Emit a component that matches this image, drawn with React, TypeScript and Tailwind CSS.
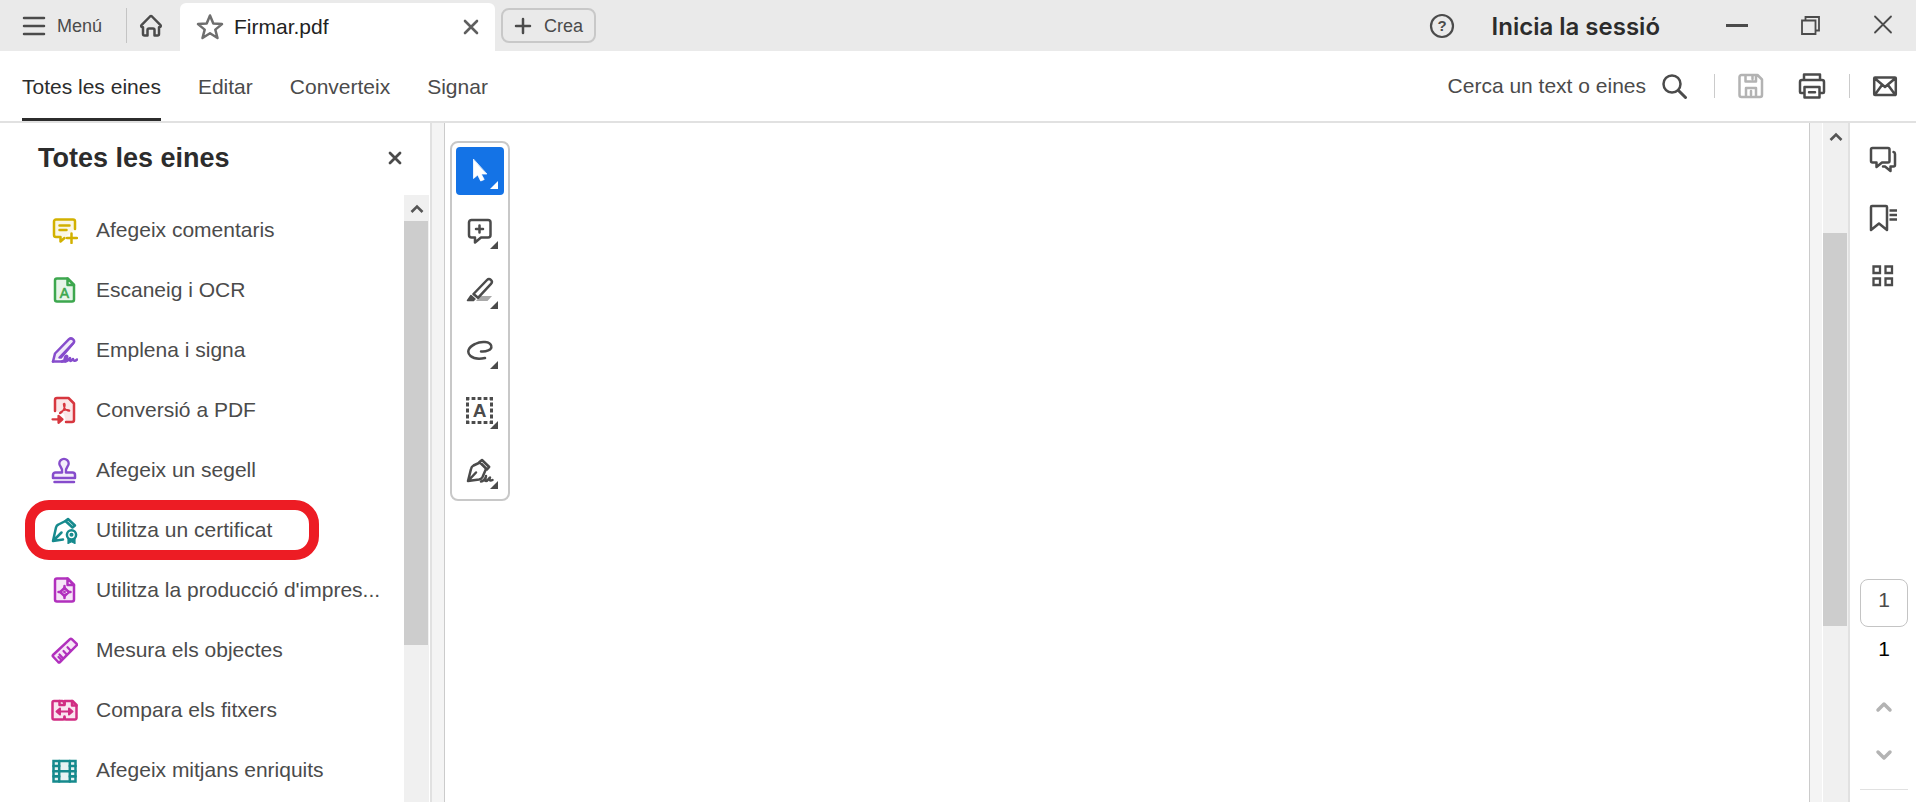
import React from "react";
import { clsx } from "clsx";

interface IconProps {
  size?: number;
  className?: string;
  children: React.ReactNode;
}

const Icon = ({ size = 28, className, children }: IconProps) => (
  <svg
    width={size}
    height={size}
    viewBox={`0 0 ${size} ${size}`}
    fill="none"
    stroke="currentColor"
    strokeWidth="2.5"
    strokeLinecap="round"
    strokeLinejoin="round"
    aria-hidden="true"
    className={clsx("shrink-0", className)}
  >
    {children}
  </svg>
);

const Page = () => (
  <>
    <path
      d="M7 2.5h10.5L24 9v14.5a2 2 0 0 1-2 2H7a2 2 0 0 1-2-2v-19a2 2 0 0 1 2-2z"
      fill="currentColor"
      fillOpacity="0.12"
    />
    <path d="M17.5 2.5V9H24z" fill="white" />
  </>
);

const tools = [
  {
    label: "Afegeix comentaris",
    color: "text-[#d2b100]",
    icon: (
      <>
        <path
          d="M14.5 22 10.5 25.500V21H6a2 2 0 0 1-2-2V5.500a2 2 0 0 1 2-2h17a2 2 0 0 1 2 2V13"
          fill="currentColor"
          fillOpacity="0.1"
        />
        <path d="M9.500 9.500h10M9.500 14h7M21.500 17.500V27M17 22h10" />
      </>
    ),
  },
  {
    label: "Escaneig i OCR",
    color: "text-[#3da74e]",
    icon: (
      <>
        <Page />
        <text
          x="14.5"
          y="21.5"
          textAnchor="middle"
          fontSize="14"
          fill="currentColor"
          strokeWidth="0.6"
        >
          A
        </text>
      </>
    ),
  },
  {
    label: "Emplena i signa",
    color: "text-[#864ccc]",
    icon: (
      <>
        <path
          d="M3 25.5 5 17.5 19 3.200c2.500-2.200 6.500 1 4.500 3.800L11 21.500"
          fill="currentColor"
          fillOpacity="0.12"
        />
        <path d="M23 7.500 9.500 21.500M3 25.500h12" />
        <path d="M12 25.500c3-1 6-4 5-5.500-1.500-1-3 3-2 5 1.500 1.500 4-1.500 5-3-1 2.500.5 4 2 2l1-1c0 2 2 2.500 4 .5" />
      </>
    ),
  },
  {
    label: "Conversió a PDF",
    color: "text-[#d7373f]",
    icon: (
      <>
        <path
          d="M5 15V4a2 2 0 0 1 2-2h11.5L24 7.500V24a2 2 0 0 1-2 2h-6l-2-8z"
          fill="currentColor"
          fillOpacity="0.12"
          stroke="none"
        />
        <path d="M5 15V4a2 2 0 0 1 2-2h11.5L24 7.500V24a2 2 0 0 1-2 2h-6" />
        <path
          d="M13.5 8c1.5-1.500 2 1 .8 4-1 2.500-3 5-4.300 5.500-1.500-.5 2-3 5-3.500 3-.6 5 0 4.500 1-1.500.5-4.500-1.500-5.500-4z"
          strokeWidth="1.5"
        />
        <path d="M2.5 23.300h8M8.500 19.800l4 3.500-4 3.500z" fill="currentColor" strokeWidth="2.200" />
      </>
    ),
  },
  {
    label: "Afegeix un segell",
    color: "text-[#864ccc]",
    icon: (
      <>
        <path
          d="M12 16.500c.3-2.500-.3-4.500-1.500-6a4.600 4.600 0 1 1 7 0c-1.200 1.500-1.800 3.500-1.500 6h6.500A2.500 2.500 0 0 1 25 19v3H3v-3a2.500 2.500 0 0 1 2.500-2.500z"
          fill="currentColor"
          fillOpacity="0.1"
        />
        <path d="M4.500 26h19.500" />
      </>
    ),
  },
  {
    label: "Utilitza un certificat",
    color: "text-[#168a8d]",
    highlighted: true,
    icon: (
      <>
        <path d="m15.500 5-7 3.500Q6.500 9.300 6 11.500L3 25l10-1.500M3.500 24.500l8-8" />
        <path d="m15.500 5 2.500-2 7 6.500-2.500 2z" fill="currentColor" fillOpacity="0.1" />
        <circle cx="21.500" cy="18.800" r="4.600" />
        <circle cx="21.500" cy="18.800" r="0.8" fill="currentColor" />
        <path d="M18 22.500v5l3.500-1.800 3.500 1.800v-5L21.500 24z" fill="currentColor" strokeWidth="1.200" />
      </>
    ),
  },
  {
    label: "Utilitza la producció d'impres...",
    color: "text-[#b130bd]",
    icon: (
      <>
        <Page />
        <path d="m14.5 11.800 4.200 4.200-4.200 4.200-4.200-4.200z" />
        <path d="M14.5 10v2M14.5 20v2M8.500 16h2M18.5 16h2" />
        <circle cx="14.5" cy="16" r="0.8" strokeWidth="1.200" />
      </>
    ),
  },
  {
    label: "Mesura els objectes",
    color: "text-[#b130bd]",
    icon: (
      <>
        <path
          d="M3 20.500a1.200 1.200 0 0 1 0-1.500L20 3.200a1.300 1.300 0 0 1 1.800 0l4.700 4.500a1.300 1.300 0 0 1 0 1.800L10 26a1.300 1.300 0 0 1-1.800 0z"
          fill="currentColor"
          fillOpacity="0.12"
        />
        <path d="m9.500 18.500 3 3.300M13.500 15l3 3.300M17.500 11.200l3 3.300M10.500 23l-2-2" strokeWidth="2.200" />
      </>
    ),
  },
  {
    label: "Compara els fitxers",
    color: "text-[#d12d83]",
    icon: (
      <>
        <path
          d="M14.5 8V6.500l-2-1.500H4a1.500 1.500 0 0 0-1.500 1.500V22A1.500 1.500 0 0 0 4 23.500h9q1.500 0 1.500-2 0 2 1.500 2h9a1.500 1.500 0 0 0 1.500-1.500V9l-4-4h-7q-1.500 0-1.500 1.500"
          fill="currentColor"
          fillOpacity="0.12"
        />
        <path d="M9.500 5v4h5M14.500 9V5M22 5v4.500h4.500M14.500 20.500V23" />
        <path d="M8 15.500h13M10 12.500l-3.500 3 3.500 3zM19 12.500l3.500 3-3.500 3z" fill="currentColor" strokeWidth="2" />
      </>
    ),
  },
  {
    label: "Afegeix mitjans enriquits",
    color: "text-[#168a8d]",
    icon: (
      <>
        <rect x="3.500" y="5" width="22" height="20.500" fill="currentColor" fillOpacity="0.1" strokeLinejoin="miter" />
        <path d="M9.200 5v20.500M19.800 5v20.500M9.200 15.200h10.600" />
        <path
          d="M3.500 10h5.700M3.500 15.200h5.700M3.500 20.400h5.700M19.800 10h5.700M19.800 15.200h5.700M19.800 20.400h5.700"
          strokeWidth="2.600"
        />
      </>
    ),
  },
];

const quickTools = [
  {
    label: "Selecciona",
    active: true,
    icon: (
      <path
        d="M7.500 2.500v19l4.200-3.500 3 6 3.500-1.500-3-5.500h5.300z"
        fill="currentColor"
        strokeWidth="0.8"
      />
    ),
  },
  {
    label: "Afegeix un comentari",
    icon: (
      <>
        <path d="M5.500 3H22a2.500 2.500 0 0 1 2.500 2.500V18a2.500 2.500 0 0 1-2.500 2.500h-7L9 25.500v-5H5.500A2.500 2.500 0 0 1 3 18V5.500A2.500 2.500 0 0 1 5.500 3z" />
        <path d="M13.500 8.500v7M10 12h7" />
      </>
    ),
  },
  {
    label: "Ressalta",
    icon: (
      <>
        <path d="M14 19h12l-4.500 5H10z" fill="#a9a9a9" stroke="none" />
        <path d="M7.500 17 21 3a2.700 2.700 0 0 1 4 3.800L12 20.800z" />
        <path d="M5 18.500 9 22l-1.500 1.500h-6z" fill="currentColor" strokeWidth="1.500" />
      </>
    ),
  },
  {
    label: "Dibuixa",
    icon: (
      <path d="M15 14.500c5 .5 11-1.500 10.300-5.200C24.500 4.200 15 4 9 7c-7 3.300-8.500 8.500-4.500 12 3.500 3 9.500 3 14.500 2" />
    ),
  },
  {
    label: "Afegeix text",
    icon: (
      <>
        <rect
          x="1.500"
          y="1.500"
          width="24"
          height="24"
          strokeWidth="3"
          strokeDasharray="3.800 2.200"
          strokeDashoffset="1.900"
          strokeLinecap="butt"
          strokeLinejoin="miter"
        />
        <text x="13.5" y="20" textAnchor="middle" fontSize="19" fontWeight="700" fill="currentColor" stroke="none">
          A
        </text>
      </>
    ),
  },
  {
    label: "Signa",
    icon: (
      <>
        <path d="M14 5.500 7.500 8.500Q5.500 9.500 5 12L2 24l11-1.500q2.500-.5 3.500-2.500l3.500-8M2.500 23.500l7.500-8" />
        <path d="m13.500 5 2.500-2 7.200 7-2.200 2.500z" />
        <path d="M15 24.500c2 0 5-3 5-5.500 0 2-2 5 0 5s3-3 4-3.500c-1 2-.5 4 2.500 2.500" />
      </>
    ),
  },
];

const sidePanels = [
  {
    label: "Comentaris",
    icon: (
      <>
        <path d="M3.500 2H19a1.500 1.500 0 0 1 1.500 1.500V15a1.500 1.500 0 0 1-1.500 1.500h-6L7.500 21v-4.500h-4A1.500 1.500 0 0 1 2 15V3.500A1.500 1.500 0 0 1 3.500 2z" />
        <path d="M24.500 6q1.500.3 1.500 2v11q0 1.500-1.500 1.500h-3V25L16 20.500h-2" />
      </>
    ),
  },
  {
    label: "Adreces d'interès",
    icon: (
      <>
        <path d="M3 2h14a1 1 0 0 1 1 1v23l-8-6.500L2 26V3a1 1 0 0 1 1-1z" />
        <path d="M20.5 6.500h7.500M20.5 11h7.500M20.5 15.500h7.500" strokeLinecap="butt" />
      </>
    ),
  },
  {
    label: "Miniatures",
    icon: (
      <path
        d="M4.500 4.500h6.500v6.500H4.500zM16.500 4.500H23v6.500h-6.500zM4.500 16.500h6.500V23H4.500zM16.500 16.500H23V23h-6.500z"
        strokeWidth="2.300"
        strokeLinejoin="miter"
      />
    ),
  },
];

const menus = ["Totes les eines", "Editar", "Converteix", "Signar"];

const TitleBar = () => (
  <header className="flex h-[51px] shrink-0 items-center bg-[#eaeaea] text-lg">
    <button type="button" className="ml-5 flex items-center gap-[11px]">
      <Icon size={26}>
        <path d="M4 5h20M4 13h20M4 21h20" />
      </Icon>
      Menú
    </button>
    <div className="mr-[11px] ml-6 h-[35px] w-px bg-[#c4c4c4]" />
    <button type="button" aria-label="Inici">
      <Icon size={26}>
        <path d="M3.500 12.200 12 3.500a1.500 1.500 0 0 1 2 0l8.500 8.700a1.200 1.200 0 0 1-.9 2H21V21a1.500 1.500 0 0 1-1.500 1.500h-3V17a1.500 1.500 0 0 0-1.500-1.500h-4A1.500 1.500 0 0 0 9.500 17v5.500h-3A1.500 1.500 0 0 1 5 21v-6.800h-.7a1.200 1.200 0 0 1-.8-2z" />
      </Icon>
    </button>
    <div className="mt-[3px] ml-4 flex w-[315px] items-center self-stretch rounded-t-md bg-white px-4">
      <button type="button" aria-label="Destaca" className="text-[#6e6e6e]">
        <Icon>
          <path d="m14 2.500 3.300 8 8.700.6-6.700 5.500 2.200 8.400-7.500-4.700L6.500 25l2.200-8.400L2 11.100l8.700-.6z" />
        </Icon>
      </button>
      <span className="ml-2.5 flex-1 text-[21px] text-[#222]">Firmar.pdf</span>
      <button type="button" aria-label="Tanca la pestanya" className="text-[#5f5f5f]">
        <Icon size={16}>
          <path d="m2 2 12 12M14 2 2 14" strokeWidth="2.600" />
        </Icon>
      </button>
    </div>
    <button
      type="button"
      className="ml-1.5 flex h-[35px] items-center gap-3 rounded-lg border-2 border-[#c8c8c8] px-[11px]"
    >
      <Icon size={18}>
        <path d="M9 2v14M2 9h14" />
      </Icon>
      Crea
    </button>
    <div className="flex-1" />
    <button type="button" aria-label="Ajuda">
      <Icon size={26}>
        <circle cx="13" cy="13" r="11" strokeWidth="2.200" />
        <text x="13" y="18" textAnchor="middle" fontSize="15" fontWeight="700" fill="currentColor" stroke="none">
          ?
        </text>
      </Icon>
    </button>
    <button
      type="button"
      className="mr-[66px] ml-[37px] pt-0.5 font-[Inter,'Liberation_Sans',sans-serif] text-2xl leading-7 font-semibold text-[#2c2c2c]"
    >
      Inicia la sessió
    </button>
    <div className="mr-[22px] flex gap-[51px]">
      <button type="button" aria-label="Minimitza">
        <Icon size={22}>
          <path d="M0 10.500h22" strokeWidth="3" strokeLinecap="butt" />
        </Icon>
      </button>
      <button type="button" aria-label="Restaura">
        <Icon size={22}>
          <path d="M3 5.500h13.500V19H3zM6.500 5V2H20v13.500h-3" strokeWidth="1.800" strokeLinejoin="miter" />
        </Icon>
      </button>
      <button type="button" aria-label="Tanca">
        <Icon size={22}>
          <path d="m3 1.500 16 16M19 1.500l-16 16" strokeWidth="1.800" />
        </Icon>
      </button>
    </div>
  </header>
);

const MenuBar = () => (
  <div className="flex h-[72px] shrink-0 items-center border-b-2 border-[#e1e1e1] text-[21px]">
    <nav className="ml-[22px] flex gap-[37px] self-stretch">
      {menus.map((menu, i) => (
        <button
          key={menu}
          type="button"
          className={clsx(
            "border-b-3 pt-1",
            i === 0 ? "border-[#2c2c2c] text-[#2c2c2c]" : "border-transparent"
          )}
        >
          {menu}
        </button>
      ))}
    </nav>
    <div className="flex-1" />
    <button type="button" className="flex items-center gap-4">
      Cerca un text o eines
      <Icon size={26}>
        <circle cx="10" cy="11" r="8.500" />
        <path d="m16.500 17.500 7 7" strokeWidth="3" />
      </Icon>
    </button>
    <div className="mr-[23px] ml-[26px] h-6 w-px bg-[#cbcbcb]" />
    <button type="button" aria-label="Desa" disabled className="text-[#b3b3b3]">
      <Icon size={26}>
        <path d="M3.500 2h16L24 6.500V22a2 2 0 0 1-2 2H3.500a2 2 0 0 1-2-2V4a2 2 0 0 1 2-2zM7.500 2.500v6H18v-6M8 23.500V15h10v8.500M14.500 3v3M13 18v4" />
      </Icon>
    </button>
    <button type="button" aria-label="Imprimeix" className="mr-[23px] ml-[34px]">
      <Icon>
        <path d="M6 8V2.500h16V8M6.500 21H3a1 1 0 0 1-1-1V10a2 2 0 0 1 2-2h20a2 2 0 0 1 2 2v10a1 1 0 0 1-1 1h-3.500M6.500 15h15v10.500h-15zM11 20.200h6" />
      </Icon>
    </button>
    <div className="mr-[22px] h-6 w-px bg-[#cbcbcb]" />
    <button type="button" aria-label="Envia per correu" className="mr-[18px]">
      <Icon size={26}>
        <path d="M3 4.500h20a.8.8 0 0 1 .8.8v15.900a.8.8 0 0 1-.8.8H3a.8.8 0 0 1-.8-.8V5.300a.8.8 0 0 1 .8-.8zM3 5.500l10 8.500 10-8.500M3 21.500l7-9.500M23 21.500 16 12" />
      </Icon>
    </button>
  </div>
);

const ScrollUp = () => (
  <button type="button" aria-label="Amunt" className="flex h-[26px] w-full items-center justify-center text-[#555]">
    <Icon size={14}>
      <path d="m1.500 11 5.500-5.500 5.500 5.500" strokeWidth="2.600" strokeLinecap="butt" strokeLinejoin="miter" />
    </Icon>
  </button>
);

const ToolsPane = () => (
  <aside className="flex w-[432px] shrink-0 flex-col border-r-2 border-[#e1e1e1]">
    <div className="flex h-[72px] shrink-0 items-center justify-between pr-7 pb-0.5 pl-[38px]">
      <h2 className="text-[27px] leading-8 font-bold text-[#2c2c2c]">Totes les eines</h2>
      <button type="button" aria-label="Tanca el tauler">
        <Icon size={14}>
          <path d="m2 2 10 10M12 2 2 12" strokeWidth="2.800" />
        </Icon>
      </button>
    </div>
    <div className="flex min-h-0 flex-1">
      <ul className="min-w-0 flex-1 overflow-hidden pt-[5px] pl-[25px]">
        {tools.map((tool) => (
          <li key={tool.label} className="relative h-[60px]">
            <button
              type="button"
              className="flex h-full items-center gap-[18px] pl-[25px] text-[21px] whitespace-nowrap"
            >
              <Icon className={tool.color}>{tool.icon}</Icon>
              {tool.label}
            </button>
            {tool.highlighted && (
              <div className="pointer-events-none absolute inset-y-0 left-0 w-[294px] rounded-3xl border-10 border-[#ed1c24]" />
            )}
          </li>
        ))}
      </ul>
      <div className="mr-px w-[25px] bg-[#f0f0f0]">
        <ScrollUp />
        <div className="mr-px h-[424px] bg-[#cdcdcd]" />
      </div>
    </div>
  </aside>
);

const QuickTools = () => (
  <div className="mt-[18px] ml-[5px] flex flex-col gap-3 self-start rounded-lg border-2 border-[#c8c8c8] p-1">
    {quickTools.map((tool) => (
      <button
        key={tool.label}
        type="button"
        aria-label={tool.label}
        className={clsx(
          "relative flex size-12 items-center justify-center rounded",
          tool.active && "bg-[#1473e6] text-white"
        )}
      >
        <Icon>{tool.icon}</Icon>
        <svg width="8" height="8" viewBox="0 0 8 8" className="absolute right-1.5 bottom-1.5" aria-hidden="true">
          <path d="M8 0v8H0z" fill="currentColor" />
        </svg>
      </button>
    ))}
  </div>
);

const PageRail = () => (
  <aside className="flex w-[66px] shrink-0 flex-col items-center">
    <div className="mt-[23px] flex flex-col gap-[30px]">
      {sidePanels.map((panel) => (
        <button key={panel.label} type="button" aria-label={panel.label}>
          <Icon>{panel.icon}</Icon>
        </button>
      ))}
    </div>
    <div className="flex-1" />
    <input
      type="text"
      aria-label="Pàgina actual"
      defaultValue="1"
      className="ml-0.5 size-12 rounded-lg border border-[#c4c4c4] pb-1.5 text-center text-[21px]"
    />
    <span className="mt-1.5 ml-0.5 text-[21px] leading-8 text-black">1</span>
    <button type="button" aria-label="Pàgina anterior" className="mt-8 ml-0.5 text-[#b3b3b3]">
      <Icon size={20}>
        <path d="m4 13 6-6 6 6" strokeWidth="3.500" />
      </Icon>
    </button>
    <button type="button" aria-label="Pàgina següent" className="mt-7 ml-0.5 text-[#b3b3b3]">
      <Icon size={20}>
        <path d="m4 7 6 6 6-6" strokeWidth="3.500" />
      </Icon>
    </button>
    <div className="mt-6 mb-3 ml-0.5 h-px w-12 bg-[#e1e1e1]" />
  </aside>
);

export default function App() {
  return (
    <div className="flex h-screen flex-col overflow-hidden bg-white font-['Liberation_Sans',Arial,sans-serif] text-[#4b4b4b]">
      <TitleBar />
      <MenuBar />
      <div className="flex min-h-0 flex-1">
        <ToolsPane />
        <div className="w-[13px] shrink-0 border-r border-[#cbcbcb] bg-[#f4f4f4]" />
        <main className="flex min-w-0 flex-1">
          <QuickTools />
        </main>
        <div className="w-3.5 shrink-0 border-r border-l border-r-white border-l-[#cbcbcb] bg-[#f4f4f4]" />
        <div className="w-[27px] shrink-0 border-r-2 border-[#e1e1e1] bg-[#f0f0f0]">
          <ScrollUp />
          <div className="mt-[84px] mr-px h-[393px] bg-[#cdcdcd]" />
        </div>
        <PageRail />
      </div>
    </div>
  );
}
